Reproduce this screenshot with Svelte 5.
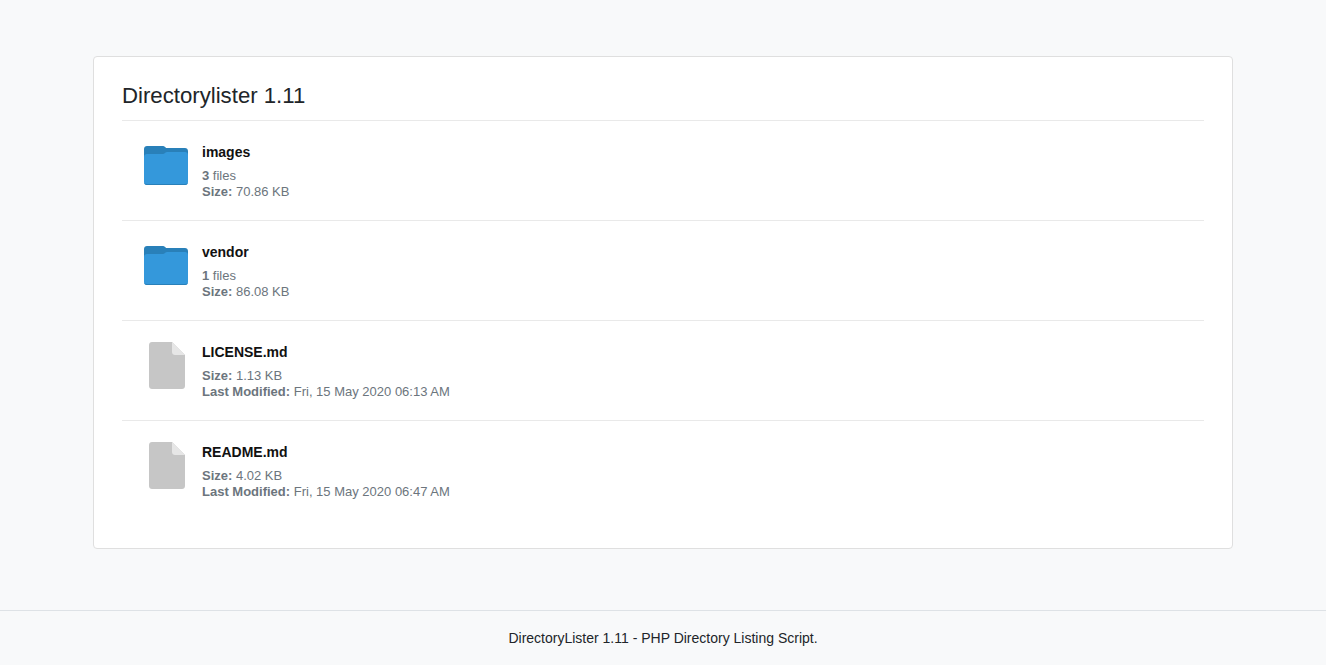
<script>
  const items = [
    { type: 'folder', name: 'images', count: '3', size: '70.86 KB' },
    { type: 'folder', name: 'vendor', count: '1', size: '86.08 KB' },
    { type: 'file', name: 'LICENSE.md', size: '1.13 KB', modified: 'Fri, 15 May 2020 06:13 AM' },
    { type: 'file', name: 'README.md', size: '4.02 KB', modified: 'Fri, 15 May 2020 06:47 AM' }
  ];
</script>

<div class="page">
  <main class="card">
    <h4 class="title">Directorylister 1.11</h4>
    <ul class="list">
      {#each items as item}
        <li class="row">
          <div class="icon">
            {#if item.type === 'folder'}
              <svg class="folder" width="44" height="39" viewBox="0 0 44 39">
                <path fill="#2980b9" d="M3 0h15c2 0 3 .6 4 2h19c1.700 0 3 1.300 3 3v11H0V3c0-1.700 1.300-3 3-3z"/>
                <path fill="#3498db" d="M3 8h15c2 0 3-.6 3.500-1.500.4-.3 1-.5 1.500-.5h18c1.700 0 3 1.300 3 3v27c0 1.700-1.300 3-3 3H3c-1.700 0-3-1.300-3-3V11c0-1.700 1.300-3 3-3z"/>
                <path fill="#2980b9" d="M0 36c0 1.700 1.300 3 3 3h38c1.700 0 3-1.300 3-3 0 1-1.300 2-3 2H3c-1.700 0-3-1-3-2z"/>
              </svg>
            {:else}
              <svg class="file" width="36" height="47" viewBox="0 0 36 47">
                <path fill="#c6c6c6" d="M3 0h20l13 13v31c0 1.700-1.300 3-3 3H3c-1.700 0-3-1.300-3-3V3c0-1.700 1.300-3 3-3z"/>
                <path fill="#e6e6e6" d="M23 0l13 13H26c-1.700 0-3-1.300-3-3z"/>
              </svg>
            {/if}
          </div>
          <div class="info">
            <div class="name">{item.name}</div>
            <div class="meta">
              {#if item.type === 'folder'}
                <div><b>{item.count}</b> files</div>
                <div><b>Size:</b> {item.size}</div>
              {:else}
                <div><b>Size:</b> {item.size}</div>
                <div><b>Last Modified:</b> {item.modified}</div>
              {/if}
            </div>
          </div>
        </li>
      {/each}
    </ul>
  </main>
  <footer class="footer">DirectoryLister 1.11 - PHP Directory Listing Script.</footer>
</div>

<style>
  :global(body) {
    margin: 0;
    background: #f8f9fa;
    font-family: "Liberation Sans", Arial, sans-serif;
    color: #212529;
  }
  .page {
    padding-top: 56px;
  }
  .card {
    box-sizing: border-box;
    width: 1140px;
    height: 493px;
    margin: 0 auto;
    padding: 25px 28px 0;
    background: #fff;
    border: 1px solid #dfdfdf;
    border-radius: 4px;
  }
  .title {
    margin: 0;
    height: 38px;
    font-size: 22.2px;
    font-weight: 400;
    line-height: 28px;
    color: #212529;
    border-bottom: 1px solid #e9e9e9;
  }
  .list {
    list-style: none;
    margin: 0;
    padding: 0;
  }
  .row {
    box-sizing: border-box;
    display: flex;
    height: 100px;
    border-bottom: 1px solid #e9e9e9;
  }
  .row:last-child {
    border-bottom: 0;
  }
  .icon {
    box-sizing: border-box;
    width: 80px;
    padding: 21px 13px 0 21px;
    display: flex;
    justify-content: center;
    align-items: flex-start;
  }
  .icon svg {
    display: block;
  }
  .icon .folder {
    margin-top: 4px;
  }
  .icon .file {
    margin-left: 2px;
  }
  .info {
    padding-top: 23px;
  }
  .name {
    font-size: 14px;
    line-height: 17px;
    font-weight: 700;
    color: #111;
  }
  .meta {
    margin-top: 7px;
    font-size: 13px;
    line-height: 16px;
    color: #6c757d;
  }
  .footer {
    margin-top: 61px;
    height: 54px;
    border-top: 1px solid #dee2e6;
    font-size: 14px;
    line-height: 54px;
    text-align: center;
    color: #212529;
  }
</style>
